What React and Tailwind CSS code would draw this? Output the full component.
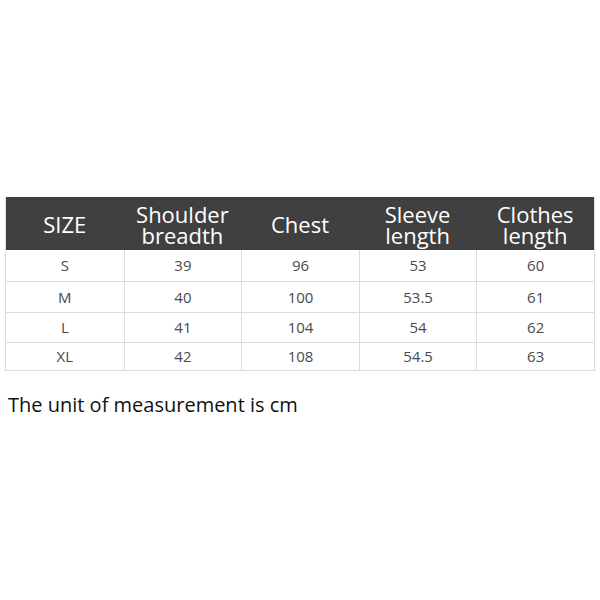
import React from "react";

const headers = [["SIZE"], ["Shoulder", "breadth"], ["Chest"], ["Sleeve", "length"], ["Clothes", "length"]];

const rows = [
  ["S", "39", "96", "53", "60"],
  ["M", "40", "100", "53.5", "61"],
  ["L", "41", "104", "54", "62"],
  ["XL", "42", "108", "54.5", "63"],
];

const rowHeights = ["h-[31px]", "h-[31px]", "h-[30px]", "h-[28px]"];

export default function App() {
  return (
    <div
      className="w-[600px] h-[600px] bg-white pt-[197px] px-[5px]"
      style={{ fontFamily: '"Open Sans", "Noto Sans", sans-serif' }}
    >
      <div className="w-[590px] border-l border-r border-b border-[#dcdcdc]">
        <div className="grid grid-cols-5 h-[53px] bg-[#404040] text-white">
          {headers.map((h, i) => (
            <div key={i} className="flex flex-col items-center justify-center text-[22px] leading-[21px] font-medium pt-[2px]">
              {h.map((line) => (
                <span key={line}>{line}</span>
              ))}
            </div>
          ))}
        </div>
        {rows.map((r, ri) => (
          <div
            key={ri}
            className={`grid grid-cols-5 ${rowHeights[ri]} ${ri > 0 ? "border-t border-[#dcdcdc]" : ""}`}
          >
            {r.map((c, ci) => (
              <div
                key={ci}
                className={`flex items-center justify-center text-[15px] text-[#4a4a4a] ${ci > 0 ? "border-l border-[#dcdcdc]" : ""}`}
              >
                {c}
              </div>
            ))}
          </div>
        ))}
      </div>
      <p className="mt-[20px] ml-[3px] text-[20px] font-medium text-[#111] leading-[28px]">
        The unit of measurement is cm
      </p>
    </div>
  );
}
